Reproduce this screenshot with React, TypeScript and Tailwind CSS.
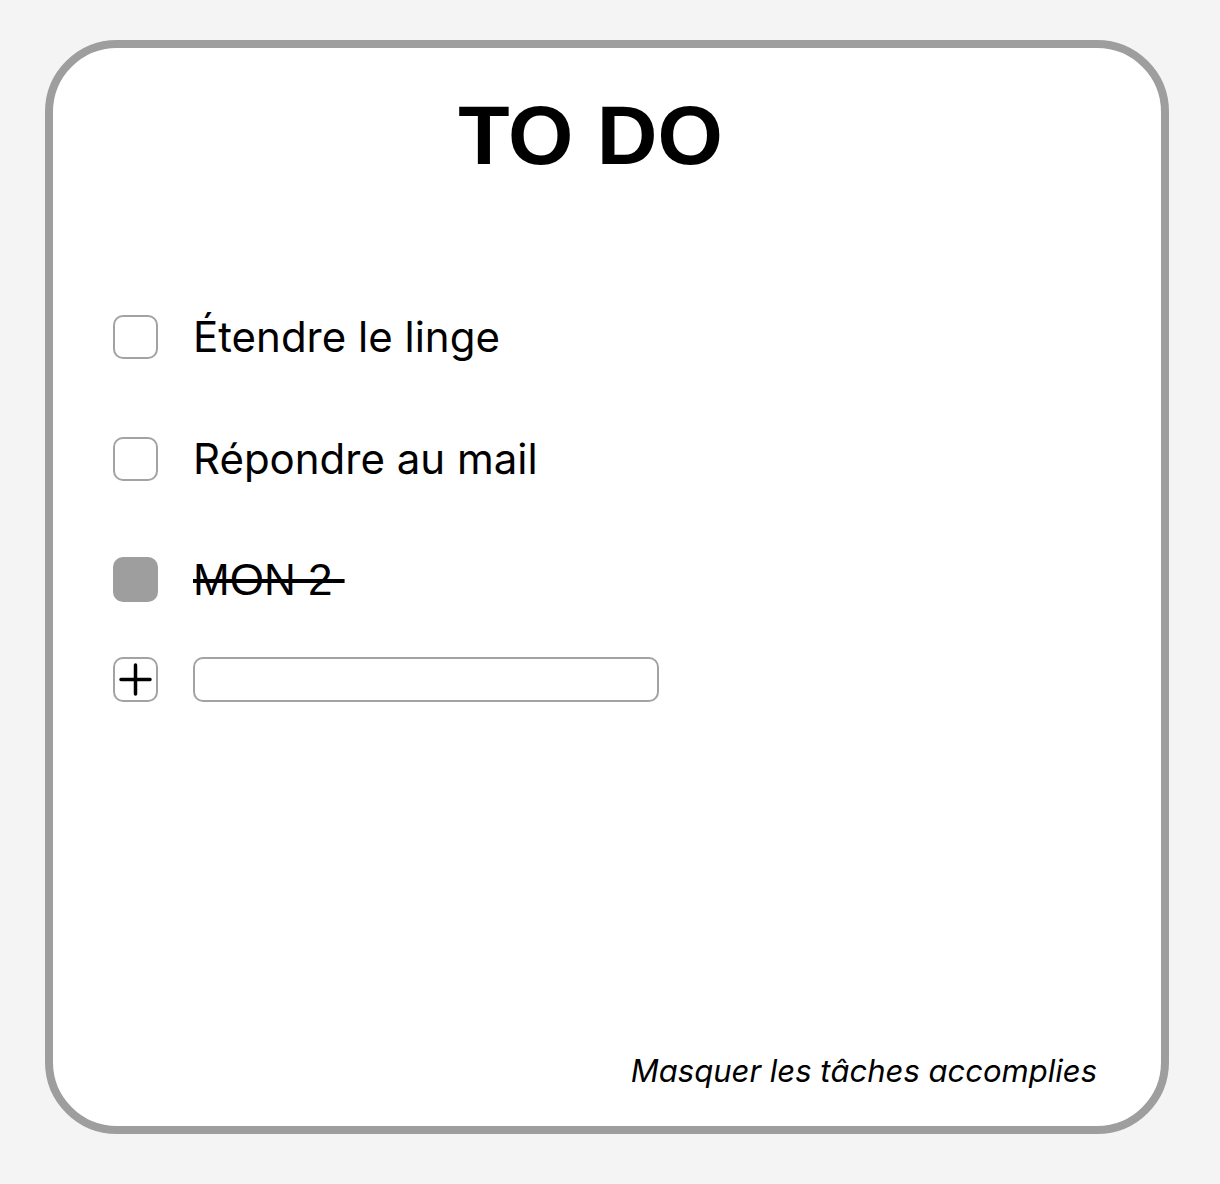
import React from "react";

export default function App() {
  return (
    <div className="min-h-screen w-[1220px] h-[1184px] bg-[#f4f4f4] pt-[40px] pl-[45px]">
      <div className="w-[1124px] h-[1094px] border-8 border-[#9e9e9e] rounded-[72px] bg-white flex flex-col">
        <div className="mt-[45px] flex justify-center pr-[33px]">
          <h1
            className="text-[84px] leading-[85px] font-bold text-black"
            style={{ fontFamily: '"Liberation Sans", Arial, sans-serif' }}
          >
            TO DO
          </h1>
        </div>

        <div
          className="mt-[136px] pl-[60px] flex flex-col"
          style={{ fontFamily: 'Inter, "Noto Sans", sans-serif' }}
        >
          <div className="flex items-center h-[45px] gap-[35px]">
            <div className="w-[45px] h-[44px] rounded-[10px] border-2 border-[#a3a3a3] bg-white shrink-0" />
            <span className="text-[42px] leading-none text-black">Étendre le linge</span>
          </div>

          <div className="flex items-center h-[45px] gap-[35px] mt-[77px]">
            <div className="w-[45px] h-[44px] rounded-[10px] border-2 border-[#a3a3a3] bg-white shrink-0" />
            <span className="text-[42px] leading-none text-black">Répondre au mail</span>
          </div>

          <div className="flex items-center h-[45px] gap-[35px] mt-[76px]">
            <div className="w-[45px] h-[45px] rounded-[10px] border-2 border-[#9e9e9e] bg-[#9e9e9e] shrink-0" />
            <span
              className="text-[44px] leading-none text-black line-through whitespace-pre"
              style={{ fontFamily: '"Liberation Sans", Arial, sans-serif' }}
            >
              {"MON 2 "}
            </span>
          </div>

          <div className="flex items-center h-[45px] gap-[35px] mt-[55px]">
            <div className="w-[45px] h-[45px] rounded-[10px] border-2 border-[#a3a3a3] bg-white shrink-0 flex items-center justify-center">
              <svg width="33" height="33" viewBox="0 0 33 33">
                <path
                  d="M16.5 2 V31 M2 16.5 H31"
                  stroke="black"
                  strokeWidth="3.5"
                  strokeLinecap="round"
                />
              </svg>
            </div>
            <div className="w-[466px] h-[45px] rounded-[10px] border-2 border-[#a3a3a3] bg-white" />
          </div>
        </div>

        <div className="mt-auto mb-[40px] flex justify-end pr-[64px]">
          <span
            className="text-[31px] italic text-black leading-none"
            style={{ fontFamily: 'Inter, "Noto Sans", sans-serif' }}
          >
            Masquer les tâches accomplies
          </span>
        </div>
      </div>
    </div>
  );
}
